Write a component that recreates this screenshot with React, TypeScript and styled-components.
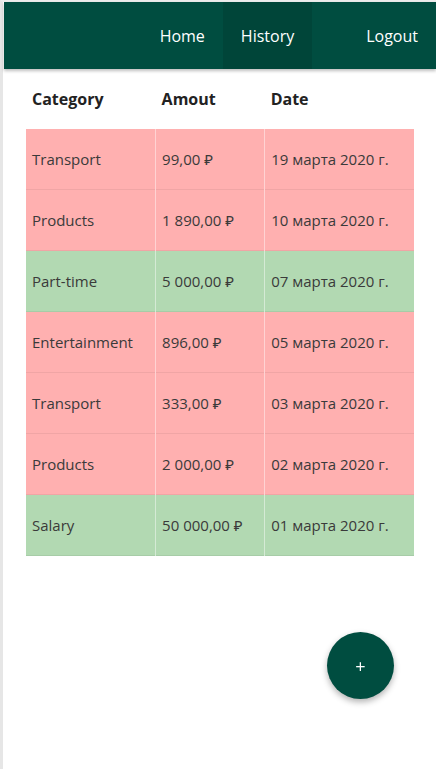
import React from 'react';
import styled, { createGlobalStyle } from 'styled-components';

const GlobalStyle = createGlobalStyle`
  html, body {
    margin: 0;
    padding: 0;
    background: #fff;
  }
  body {
    font-family: "Open Sans", "Noto Sans", sans-serif;
    color: #333;
  }
`;

type Operation = {
  category: string;
  amount: string;
  date: string;
  income: boolean;
};

const operations: Operation[] = [
  { category: 'Transport', amount: '99,00 ₽', date: '19 марта 2020 г.', income: false },
  { category: 'Products', amount: '1 890,00 ₽', date: '10 марта 2020 г.', income: false },
  { category: 'Part-time', amount: '5 000,00 ₽', date: '07 марта 2020 г.', income: true },
  { category: 'Entertainment', amount: '896,00 ₽', date: '05 марта 2020 г.', income: false },
  { category: 'Transport', amount: '333,00 ₽', date: '03 марта 2020 г.', income: false },
  { category: 'Products', amount: '2 000,00 ₽', date: '02 марта 2020 г.', income: false },
  { category: 'Salary', amount: '50 000,00 ₽', date: '01 марта 2020 г.', income: true },
];

const Page = styled.div`
  min-height: 767px;
  border-left: 3px solid #e6e6e6;
  border-top: 2px solid #ececec;
  padding-left: 1px;
`;

const Navbar = styled.nav`
  height: 67px;
  background: #004d40;
  display: flex;
  justify-content: flex-end;
  align-items: stretch;
  box-shadow: 0 2px 3px rgba(0, 0, 0, 0.25);
`;

const NavLinks = styled.ul`
  list-style: none;
  margin: 0;
  padding: 0;
  display: flex;
  align-items: stretch;
`;

const NavItem = styled.li<{ $active?: boolean; $spaced?: boolean }>`
  display: flex;
  align-items: center;
  padding: 1px 18px 0;
  margin-left: ${(p) => (p.$spaced ? '36px' : '0')};
  background: ${(p) => (p.$active ? 'rgba(0, 0, 0, 0.1)' : 'transparent')};
  color: #fff;
  font-size: 16px;
  cursor: pointer;
`;

const Content = styled.main`
  padding: 0 22px;
`;

const Table = styled.table`
  width: 100%;
  border-collapse: collapse;
  margin-top: 4px;
  font-size: 15px;
`;

const HeadCell = styled.th<{ $width: number }>`
  width: ${(p) => p.$width}px;
  text-align: left;
  font-weight: 700;
  font-size: 16px;
  color: #222;
  padding: 0 6px 5px;
  height: 51px;
`;

const Row = styled.tr<{ $income: boolean }>`
  background: ${(p) => (p.$income ? '#b2d9b2' : '#ffb0b0')};
  border-bottom: 1px solid rgba(0, 0, 0, 0.06);
`;

const Cell = styled.td`
  height: 60px;
  padding: 0 6px;
  color: #3a3a3a;
  white-space: nowrap;
  & + & {
    border-left: 1px solid rgba(255, 255, 255, 0.45);
  }
`;

const Fab = styled.button`
  position: fixed;
  right: 42px;
  bottom: 70px;
  width: 67px;
  height: 67px;
  border-radius: 50%;
  border: none;
  background: #004d40;
  color: #fff;
  font-size: 18px;
  font-family: "Open Sans", sans-serif;
  box-shadow: 0 3px 6px rgba(0, 0, 0, 0.3);
  cursor: pointer;
`;

const App = () => {
  return (
    <Page>
      <GlobalStyle />
      <Navbar>
        <NavLinks>
          <NavItem>Home</NavItem>
          <NavItem $active>History</NavItem>
          <NavItem $spaced>Logout</NavItem>
        </NavLinks>
      </Navbar>
      <Content>
        <Table>
          <thead>
            <tr>
              <HeadCell $width={129}>Category</HeadCell>
              <HeadCell $width={108}>Amout</HeadCell>
              <HeadCell $width={151}>Date</HeadCell>
            </tr>
          </thead>
          <tbody>
            {operations.map((op, i) => (
              <Row key={i} $income={op.income}>
                <Cell>{op.category}</Cell>
                <Cell>{op.amount}</Cell>
                <Cell>{op.date}</Cell>
              </Row>
            ))}
          </tbody>
        </Table>
      </Content>
      <Fab>+</Fab>
    </Page>
  );
};

export default App;
